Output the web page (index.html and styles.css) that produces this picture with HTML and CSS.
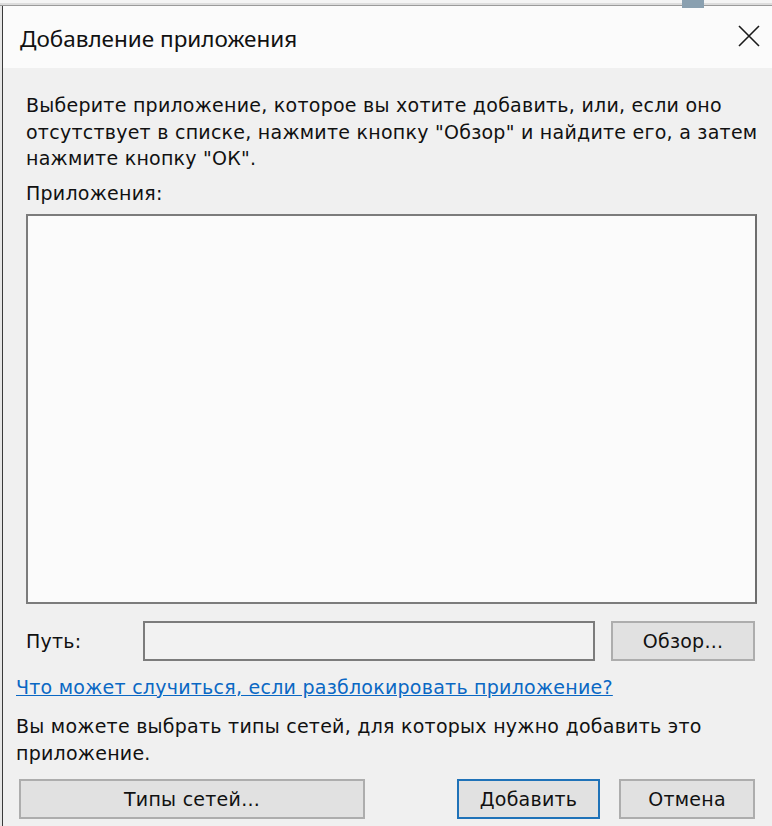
FILE: index.html
```html
<!DOCTYPE html>
<html lang="ru">
<head>
<meta charset="utf-8">
<title>Добавление приложения</title>
<link rel="stylesheet" href="styles.css">
</head>
<body>
<div class="topstrip"><span class="topicon"></span></div>
<div class="dialog">
  <div class="titlebar">
    <span class="title">Добавление приложения</span>
    <svg class="close" width="22" height="22" viewBox="0 0 22 22"><path d="M1 1 L21 21 M21 1 L1 21" stroke="#1a1a1a" stroke-width="1.6" fill="none"/></svg>
  </div>
  <div class="content">
    <p class="intro">Выберите приложение, которое вы хотите добавить, или, если оно отсутствует в списке, нажмите кнопку "Обзор" и найдите его, а затем нажмите кнопку "ОК".</p>
    <div class="label">Приложения:</div>
    <div class="listbox"></div>
    <div class="pathrow">
      <span class="pathlabel">Путь:</span>
      <div class="pathinput"></div>
      <button class="btn browse">Обзор...</button>
    </div>
    <a class="link" href="#">Что может случиться, если разблокировать приложение?</a>
    <p class="note">Вы можете выбрать типы сетей, для которых нужно добавить это приложение.</p>
    <div class="buttons">
      <button class="btn nettypes">Типы сетей...</button>
      <button class="btn add">Добавить</button>
      <button class="btn cancel">Отмена</button>
    </div>
  </div>
</div>
</body>
</html>
```
FILE: styles.css
```css
html, body {
  margin: 0;
  padding: 0;
  width: 772px;
  height: 826px;
  overflow: hidden;
  background: #e6e6e6;
  font-family: "DejaVu Sans", "Noto Sans", sans-serif;
  font-size: 19px;
  letter-spacing: 0.25px;
  color: #111;
}
.topstrip {
  height: 6px;
  background: #dcdcdc;
  border-top: 3px solid #f4f4f4;
  border-bottom: 1px solid #9a9a9a;
  box-sizing: border-box;
  position: relative;
}
.topicon {
  position: absolute;
  left: 682px;
  top: -3px;
  width: 22px;
  height: 8px;
  background: #8aa0b0;
}
.dialog {
  margin-left: 2px;
  border-left: 1px solid #3a3a3a;
  height: 820px;
  background: #f0f0f0;
  display: flex;
  flex-direction: column;
}
.titlebar {
  height: 62px;
  background: #fbfbfb;
  display: flex;
  align-items: center;
  justify-content: space-between;
  padding: 0 12px 0 17px;
  flex-shrink: 0;
}
.title {
  font-family: "Noto Sans", "Open Sans", sans-serif;
  font-size: 22.5px;
  letter-spacing: 0;
  padding-top: 2px;
}
.close {
  margin-top: -2px;
}
.content {
  padding: 24px 12px 0 13px;
  display: flex;
  flex-direction: column;
}
.intro {
  margin: 0 0 0 10px;
  line-height: 26.5px;
  width: 735px;
}
.label {
  margin: 8px 0 0 10px;
  line-height: 26px;
}
.listbox {
  margin: 8px 0 0 10px;
  width: 727px;
  height: 386px;
  background: #fbfbfb;
  border: 2px solid #7c7c7c;
  border-right-color: #6e6e6e;
}
.pathrow {
  margin: 17px 0 0 10px;
  display: flex;
  align-items: center;
}
.pathlabel {
  width: 117px;
}
.pathinput {
  width: 452px;
  height: 40px;
  box-sizing: border-box;
  border: 2px solid #7c7c7c;
  background: #f2f2f2;
}
.btn {
  font-family: inherit;
  font-size: 19px;
  letter-spacing: 0.25px;
  color: #111;
  background: #e1e1e1;
  border: 2px solid #adadad;
  height: 40px;
  padding: 0;
  box-sizing: border-box;
  flex-shrink: 0;
}
.browse {
  margin-left: 16px;
  width: 144px;
}
.link {
  margin: 13px 0 0 0;
  color: #0a68c4;
  text-decoration: underline;
  line-height: 26px;
  align-self: flex-start;
}
.note {
  margin: 13.5px 0 0 0;
  line-height: 27px;
  width: 735px;
}
.buttons {
  margin-top: 11.5px;
  display: flex;
  padding-left: 3px;
}
.nettypes {
  width: 346px;
}
.add {
  margin-left: 92px;
  width: 143px;
  border: 2px solid #1f72b8;
}
.cancel {
  margin-left: 19px;
  width: 136px;
}
```
